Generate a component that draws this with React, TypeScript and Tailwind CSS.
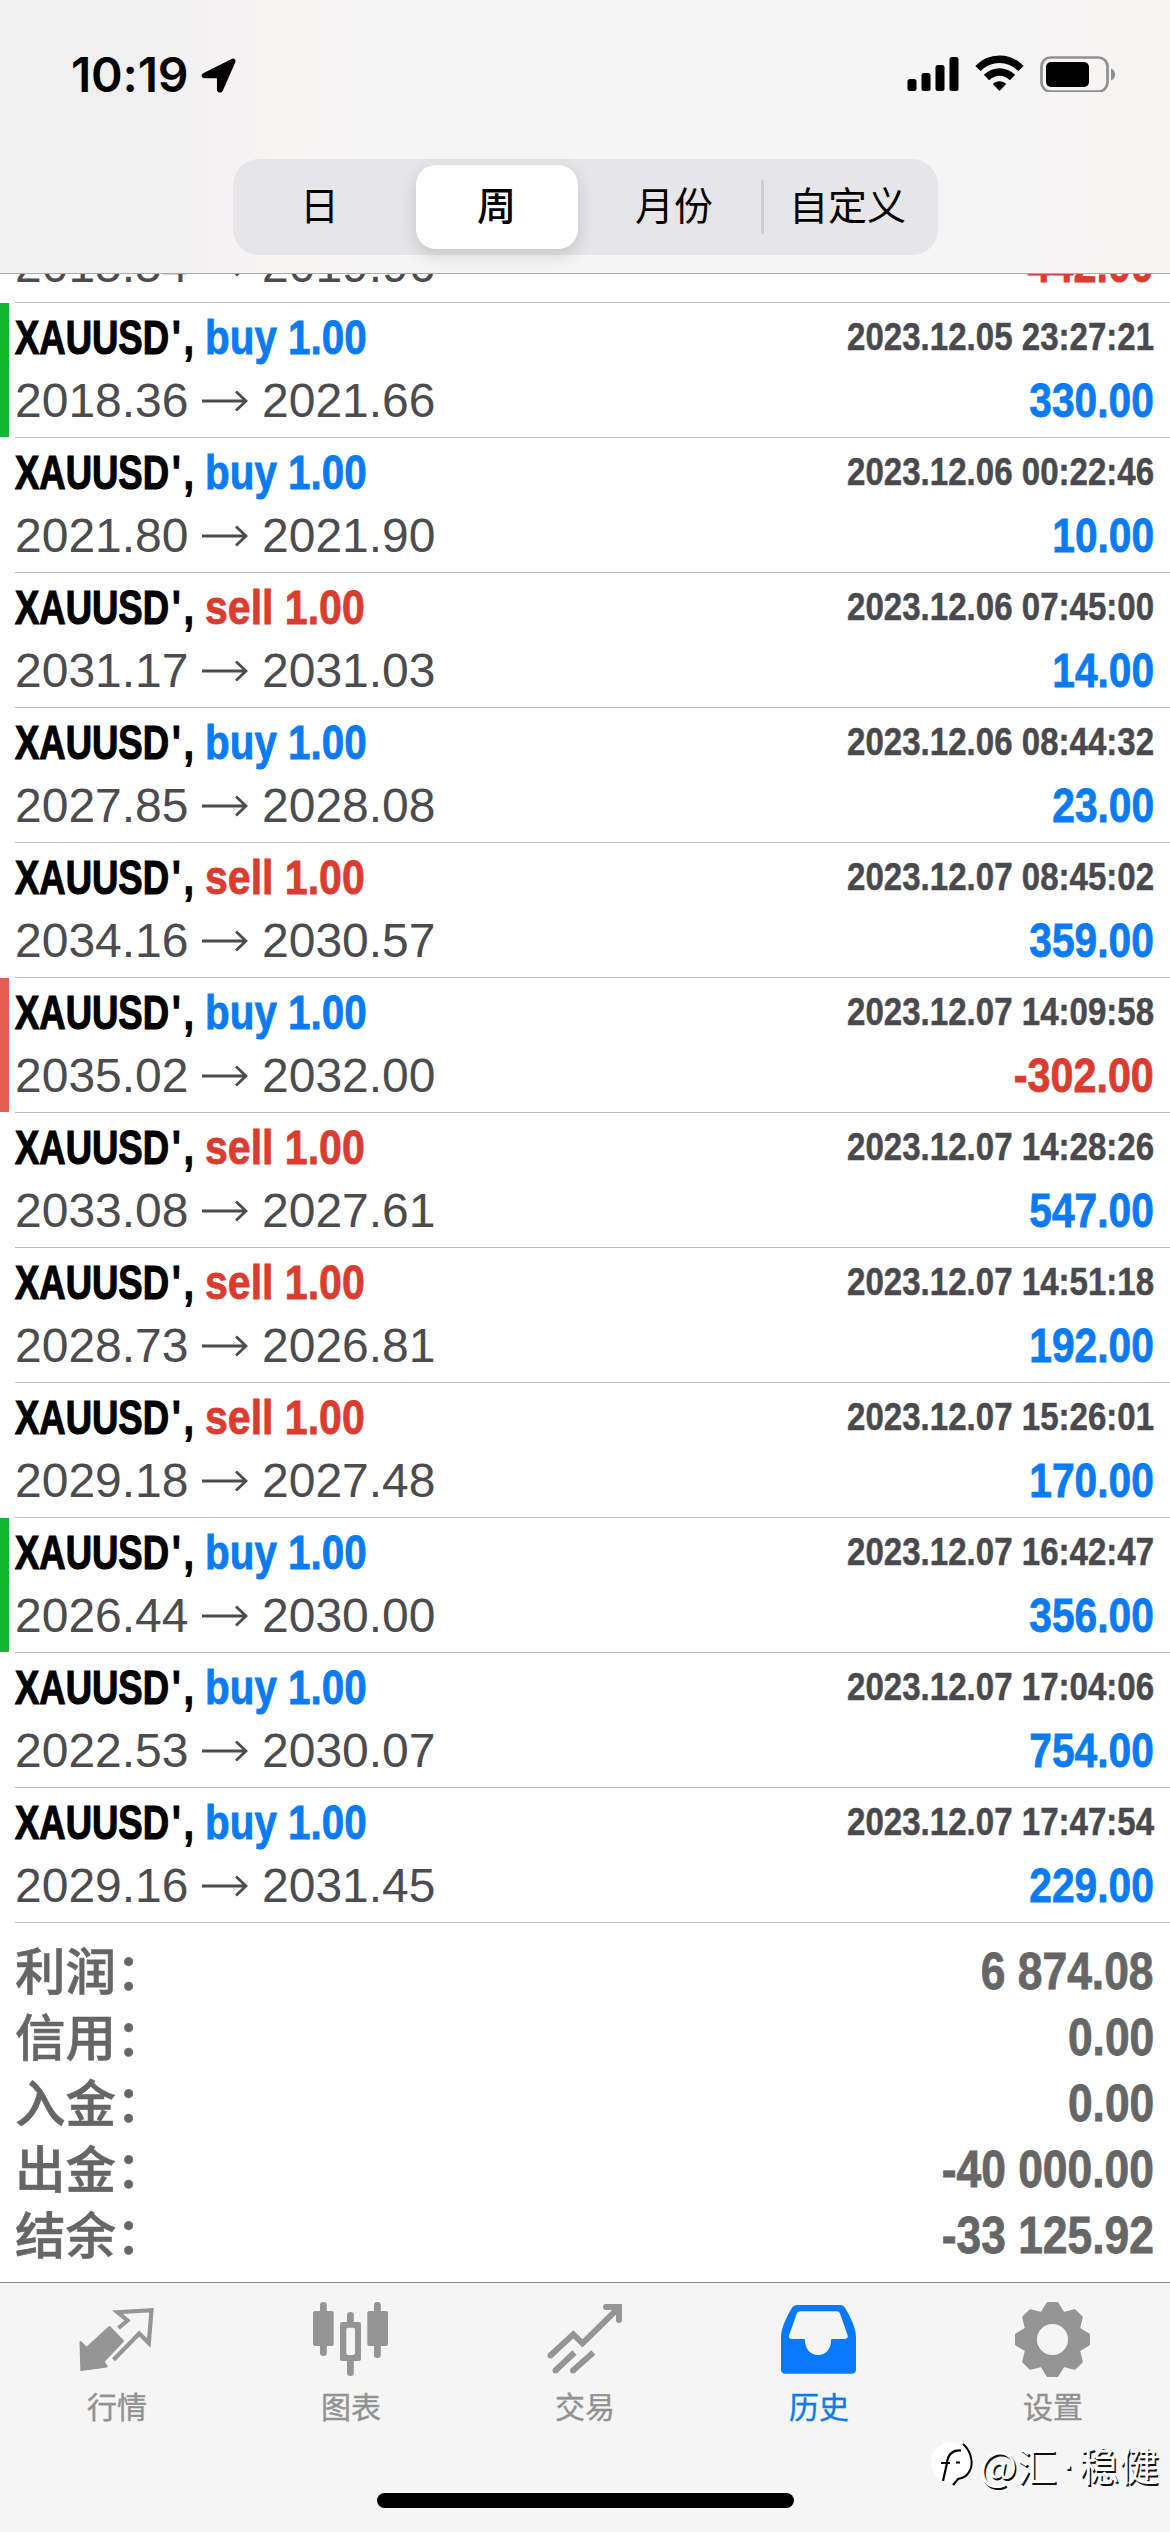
import type { ReactNode } from "react";

type Side = "buy" | "sell";

interface Deal {
  side: Side;
  open: string;
  close: string;
  time: string;
  profit: string;
  mark?: "tp" | "sl";
}

const deals: Deal[] = [
  { side: "sell", open: "2015.54", close: "2019.96", time: "2023.12.05 17:31:08", profit: "-442.00" },
  { side: "buy", open: "2018.36", close: "2021.66", time: "2023.12.05 23:27:21", profit: "330.00", mark: "tp" },
  { side: "buy", open: "2021.80", close: "2021.90", time: "2023.12.06 00:22:46", profit: "10.00" },
  { side: "sell", open: "2031.17", close: "2031.03", time: "2023.12.06 07:45:00", profit: "14.00" },
  { side: "buy", open: "2027.85", close: "2028.08", time: "2023.12.06 08:44:32", profit: "23.00" },
  { side: "sell", open: "2034.16", close: "2030.57", time: "2023.12.07 08:45:02", profit: "359.00" },
  { side: "buy", open: "2035.02", close: "2032.00", time: "2023.12.07 14:09:58", profit: "-302.00", mark: "sl" },
  { side: "sell", open: "2033.08", close: "2027.61", time: "2023.12.07 14:28:26", profit: "547.00" },
  { side: "sell", open: "2028.73", close: "2026.81", time: "2023.12.07 14:51:18", profit: "192.00" },
  { side: "sell", open: "2029.18", close: "2027.48", time: "2023.12.07 15:26:01", profit: "170.00" },
  { side: "buy", open: "2026.44", close: "2030.00", time: "2023.12.07 16:42:47", profit: "356.00", mark: "tp" },
  { side: "buy", open: "2022.53", close: "2030.07", time: "2023.12.07 17:04:06", profit: "754.00" },
  { side: "buy", open: "2029.16", close: "2031.45", time: "2023.12.07 17:47:54", profit: "229.00" },
];

const totals = [
  ["利润：", "6 874.08"],
  ["信用：", "0.00"],
  ["入金：", "0.00"],
  ["出金：", "-40 000.00"],
  ["结余：", "-33 125.92"],
];

function StatusBar() {
  return (
    <div className="flex h-[150px] items-start justify-between pr-[54px] pl-[71px]">
      <div className="flex items-center gap-[12px] pt-[51px]">
        <span className="w-[117px] font-['Inter',sans-serif] text-[48px] leading-[48px] font-semibold whitespace-nowrap tracking-[-0.2px]">10:19</span>
        <svg width="37" height="37" viewBox="0 0 37 37">
          <path
            d="M3.5 17 32 2.6c2-.8 3.4.5 2.6 2.4L22 33.6c-.9 2-4.3 1.600-4.300-.6V20.400H4.600C2 20.400 1.400 18 3.500 17Z"
            stroke="#000"
            strokeWidth="1.500"
            strokeLinejoin="round"
          />
        </svg>
      </div>
      <div className="flex items-center pt-[54px]">
        <svg width="52" height="38" viewBox="0 0 52 38">
          <rect x="0.500" y="25" width="9" height="12" rx="2.500" />
          <rect x="14.500" y="19" width="9" height="18" rx="2.500" />
          <rect x="28.500" y="11" width="9" height="26" rx="2.500" />
          <rect x="42.500" y="3" width="9" height="34" rx="2.500" />
        </svg>
        <svg className="ml-[16px]" width="49" height="38" viewBox="0 0 49 38" fill="none" stroke="#000">
          <path d="M3 14.500C15 2.200 34 2.200 46 14.500" strokeWidth="7.500" />
          <path d="M11.500 23.500C19 16 30 16 37.500 23.500" strokeWidth="7.500" />
          <path d="M24.500 37 17.800 30C21.500 26.200 27.500 26.200 31.200 30Z" fill="#000" stroke="none" />
        </svg>
        <svg className="ml-[16px]" width="76" height="38" viewBox="0 0 76 38">
          <rect x="1.500" y="3.500" width="66" height="34" rx="9" fill="none" stroke="#8f8f8f" strokeWidth="2.700" />
          <rect x="6" y="8" width="43" height="25" rx="5" />
          <path d="M71 14.500c5.500 2 5.500 10 0 12Z" fill="#8f8f8f" />
        </svg>
      </div>
    </div>
  );
}

function Segmented() {
  return (
    <div className="mx-auto mt-[9px] flex h-[96px] w-[705px] items-center rounded-[26px] bg-[#e6e5e7] p-[6px] text-[39px] leading-[58px] whitespace-nowrap">
      <div className="w-[162px] text-center">日</div>
      <div className="ml-[15px] flex h-[84px] w-[162px] items-center justify-center rounded-[20px] bg-white font-medium shadow-[0_6px_18px_rgba(0,0,0,0.14)]">
        周
      </div>
      <div className="w-[183px] pl-[10px] text-center">月份</div>
      <div className="h-[54px] w-[3px] rounded-full bg-[#cfcfd1]" />
      <div className="flex-1 text-center">自定义</div>
    </div>
  );
}

function Arrow() {
  return (
    <svg className="mx-[13px] shrink-0" width="46" height="24" viewBox="0 0 46 24" fill="none" stroke="#4c4c4f" strokeWidth="2.800">
      <path d="M0 12H44M34 2.500 44 12 34 21.500" />
    </svg>
  );
}

function DealRow({ deal }: { deal: Deal }) {
  const loss = deal.profit.startsWith("-");
  return (
    <div className="flex h-[135px] shrink-0">
      <div
        className={
          deal.mark === "tp"
            ? "mr-[6px] h-[134px] w-[9px] bg-[#14b830]"
            : deal.mark === "sl"
              ? "mr-[6px] h-[134px] w-[9px] bg-[#e55c50]"
              : "mr-[6px] h-[134px] w-[9px]"
        }
      />
      <div className="flex h-full flex-1 flex-col border-b border-[#bcbcbe] pt-[3px] pr-[16px] whitespace-nowrap">
        <div className="flex h-[63px] items-center justify-between">
          <div className="flex items-center text-[48px] font-bold leading-[63px]">
            <span className="w-[190px] origin-left scale-x-[0.76] [-webkit-text-stroke:1.200px_#000]">
              XAUUS<span className="tracking-[4px]">D'</span>,
            </span>
            <span
              className={
                deal.side === "buy"
                  ? "origin-left scale-x-[0.842] text-[#0a7bf2] [-webkit-text-stroke:0.800px_#0a7bf2]"
                  : "origin-left scale-x-[0.855] text-[#db3c30] [-webkit-text-stroke:0.800px_#db3c30]"
              }
            >
              {deal.side} 1.00
            </span>
          </div>
          <span className="origin-right scale-x-[0.848] text-[39px] font-bold text-[#4a4a4e] [-webkit-text-stroke:0.500px_#4a4a4e]">
            {deal.time}
          </span>
        </div>
        <div className="flex h-[63px] items-center justify-between text-[48px] leading-[63px]">
          <div className="flex items-center text-[#4c4c4f]">
            <span className="w-[174px]">{deal.open}</span>
            <Arrow />
            <span className="ml-[1px]">{deal.close}</span>
          </div>
          <span
            className={
              loss
                ? "origin-right scale-x-[0.86] font-bold text-[#db3c30] [-webkit-text-stroke:0.800px_#db3c30]"
                : "origin-right scale-x-[0.848] font-bold text-[#0a7bf2] [-webkit-text-stroke:0.800px_#0a7bf2]"
            }
          >
            {deal.profit}
          </span>
        </div>
      </div>
    </div>
  );
}

function IconBox({ children }: { children: ReactNode }) {
  return (
    <svg width="78" height="78" viewBox="0 0 78 78" fill="none" stroke="none">
      {children}
    </svg>
  );
}

const G = "#959595";

const tabs = [
  {
    label: "行情",
    icon: (
      <IconBox>
        <path d="M2.500 42 8.500 48 31.500 27 45 41 25.500 61.500 28.700 66.500 3.300 70Z" fill={G} stroke={G} strokeWidth="2" strokeLinejoin="round" />
        <path d="M40.500 28 49.500 20.500 39.500 12.200 73.500 10.200 70.800 43 61.300 33.500 35.500 59.800" stroke={G} strokeWidth="4.200" />
      </IconBox>
    ),
  },
  {
    label: "图表",
    icon: (
      <IconBox>
        <g fill={G}>
          <rect x="8" y="2" width="6.800" height="54" rx="3.300" />
          <rect x="1" y="11" width="20.700" height="35" rx="2" />
          <rect x="35" y="12" width="6.800" height="15" rx="3.300" />
          <rect x="35" y="56" width="6.800" height="20" rx="3.300" />
          <path fillRule="evenodd" d="M30 22H47a2 2 0 0 1 2 2V59a2 2 0 0 1-2 2H30a2 2 0 0 1-2-2V24a2 2 0 0 1 2-2ZM36.300 27.700a2 2 0 0 0-2 2V53a2 2 0 0 0 2 2H41a2 2 0 0 0 2-2V29.700a2 2 0 0 0-2-2Z" />
          <rect x="62" y="2" width="6.800" height="56" rx="3.300" />
          <rect x="55.300" y="11" width="20.700" height="35" rx="2" />
        </g>
      </IconBox>
    ),
  },
  {
    label: "交易",
    icon: (
      <IconBox>
        <g stroke={G} strokeWidth="6">
          <path d="M4.500 55.500 27.300 34.300 36.500 43.300 73 7.500" />
          <path d="M60 7H73V20" strokeLinecap="round" />
          <path d="M9.500 70.500 28.500 52.500M27 70.500 47.300 52.500" />
        </g>
        <g fill={G}>
          <circle cx="4.500" cy="55.500" r="3" />
          <circle cx="9.500" cy="70.500" r="3" />
          <circle cx="27" cy="70.500" r="3" />
        </g>
      </IconBox>
    ),
  },
  {
    label: "历史",
    icon: (
      <IconBox>
        <path
          fillRule="evenodd"
          fill="#0879fb"
          d="M17.500 5H60c2.500 0 4 1 5.200 3.200C70 16 76 28 76 37V69.500c0 2.700-1.500 4.200-4.200 4.200H5.200C2.500 73.700 1 72.200 1 69.500V37C1 28 7 16 11.800 8.200 13 6 15 5 17.500 5ZM20.500 11.300c-1.800 0-3 .7-3.700 2.200L9.200 35c-.8 2.500.3 4 2.800 4H23.500c1 0 1.500.5 1.500 1.500C25 49.500 31 55 38.200 55S51 49.500 51 40.500c0-1 .5-1.500 1.500-1.500H64.500c2.500 0 3.800-1.500 3-4L60 13.500c-.7-1.500-1.900-2.200-3.700-2.200Z"
        />
      </IconBox>
    ),
  },
  {
    label: "设置",
    icon: (
      <IconBox>
        <g fill={G} stroke={G} strokeWidth="3" strokeLinejoin="round">
          {[0, 45, 90, 135, 180, 225, 270, 315].map((a) => (
            <path key={a} d="M28 13 33.800 3.500H43.200L49 13Z" transform={`rotate(${a} 38.500 39.500)`} />
          ))}
        </g>
        <circle cx="38.500" cy="39.500" r="21.800" stroke={G} strokeWidth="12.500" />
      </IconBox>
    ),
  },
];

export default function App() {
  return (
    <div className="relative flex h-[2532px] w-[1170px] flex-col overflow-hidden bg-white font-['Liberation_Sans','Noto_Sans_CJK_SC',sans-serif] text-black">
      <header className="h-[274px] shrink-0 border-b border-[#ababad] bg-[linear-gradient(90deg,#f0f0f0_0%,#f1f0f0_12%,#f7f5f4_24%,#f5f5f5_38%,#f5f5f5_80%,#f8f4f4_100%)]">
        <StatusBar />
        <Segmented />
      </header>

      <main className="flex h-[2008px] shrink-0 flex-col overflow-hidden">
        <div className="-mt-[106px] flex shrink-0 flex-col">
          {deals.map((d) => (
            <DealRow key={d.time} deal={d} />
          ))}
        </div>
        <div className="flex flex-col pt-[15px] pr-[16px] pl-[15px]">
          {totals.map(([label, value]) => (
            <div key={label} className="flex h-[66px] items-center justify-between leading-[66px] whitespace-nowrap text-[#666666]">
              <span className="-mt-[7px] font-['Noto_Sans_CJK_SC',sans-serif] text-[50.500px] font-medium [-webkit-text-stroke:0.600px_#666666]">
                {label}
              </span>
              <span className="mt-[1px] origin-right scale-x-[0.87] text-[51px] font-bold [-webkit-text-stroke:0.800px_#666666]">{value}</span>
            </div>
          ))}
        </div>
      </main>

      <footer className="flex h-[250px] shrink-0 flex-col items-center border-t border-[#8e8e90] bg-[#f5f5f5]">
        <nav className="grid w-full grid-cols-5 pt-[17px]">
          {tabs.map((t, i) => (
            <div key={t.label} className="flex flex-col items-center">
              {t.icon}
              <span
                className={
                  i === 3
                    ? "mt-[5px] font-['Noto_Sans_CJK_SC',sans-serif] text-[30px] leading-[44px] text-[#0f7be6] [-webkit-text-stroke:0.400px_#0f7be6]"
                    : "mt-[5px] font-['Noto_Sans_CJK_SC',sans-serif] text-[30px] leading-[44px] text-[#929292] [-webkit-text-stroke:0.400px_#929292]"
                }
              >
                {t.label}
              </span>
            </div>
          ))}
        </nav>
        <div className="mt-[66px] h-[15px] w-[417px] rounded-full bg-black" />
      </footer>

      <div className="absolute right-[11px] bottom-[38px] flex items-center">
        <svg className="mr-[1px]" width="48" height="52" viewBox="0 0 48 52" fill="none">
          <circle cx="21" cy="20" r="20" fill="#fff" />
          <path d="M13 39 17 21C18 12 23 8 31 8.500M11 21H20M26 20.500H30" stroke="#000" strokeWidth="2.200" />
          <path d="M33 2C40 8 43 18 41 26 38 34 34 36 28 37L23 43" stroke="#000" strokeWidth="2" />
        </svg>
        <div className="-mt-[9px] flex font-['Noto_Sans_CJK_SC',sans-serif] text-[40px] leading-[58px] whitespace-nowrap text-white [text-shadow:1.500px_1.500px_0_#111]">
          <span>@汇</span>
          <span className="w-[22px] text-center font-['Liberation_Sans',sans-serif]">·</span>
          <span>稳健</span>
        </div>
      </div>
    </div>
  );
}
